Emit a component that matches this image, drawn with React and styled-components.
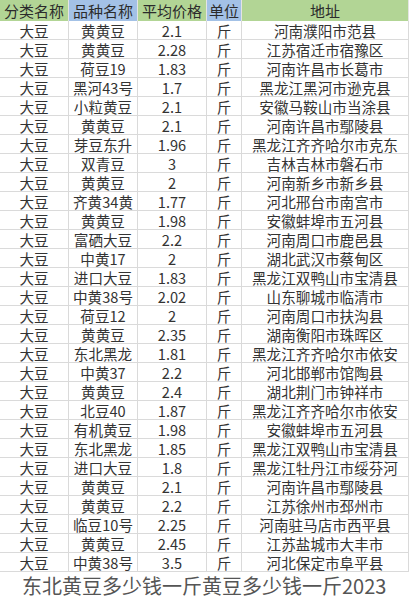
import styled, { createGlobalStyle } from "styled-components";

const GlobalStyle = createGlobalStyle`
  body {
    margin: 0;
    background: #ffffff;
    font-family: "Noto Sans CJK SC", "Liberation Sans", sans-serif;
  }
`;

const Page = styled.div`
  width: 409px;
  height: 600px;
  overflow: hidden;
  display: flex;
  flex-direction: column;
`;

const Table = styled.div`
  display: grid;
  grid-template-columns: 69px 69px 69px 35px 1fr;
`;

const Head = styled.div`
  height: 21px;
  display: flex;
  align-items: center;
  justify-content: center;
  font-size: 15px;
  color: #2b2b2b;
  background-color: ${(props) => (props.blue ? "#a3c1e6" : "#b2d595")};
  border-right: 1px solid #e4e4e4;
  box-sizing: border-box;
  white-space: nowrap;
`;

const Cell = styled.div`
  height: 19px;
  display: flex;
  align-items: center;
  justify-content: center;
  font-size: 14.6px;
  color: #333333;
  border-right: 1px solid #dadada;
  border-bottom: 1px solid #dadada;
  box-sizing: border-box;
  white-space: nowrap;
  overflow: hidden;
`;

const Caption = styled.div`
  margin-top: 4px;
  padding-left: 22px;
  font-size: 20px;
  line-height: 20px;
  color: #555555;
  white-space: nowrap;
  text-shadow: 0 0 2px #fff, 1px 1px 0 #fff, -1px -1px 0 #fff;
`;

const heads = [
  ["分类名称", false],
  ["品种名称", true],
  ["平均价格", false],
  ["单位", true],
  ["地址", false],
];

const rows = [
  ["黄黄豆", "2.1", "河南濮阳市范县"],
  ["黄黄豆", "2.28", "江苏宿迁市宿豫区"],
  ["荷豆19", "1.83", "河南许昌市长葛市"],
  ["黑河43号", "1.7", "黑龙江黑河市逊克县"],
  ["小粒黄豆", "2.1", "安徽马鞍山市当涂县"],
  ["黄黄豆", "2.1", "河南许昌市鄢陵县"],
  ["芽豆东升", "1.96", "黑龙江齐齐哈尔市克东"],
  ["双青豆", "3", "吉林吉林市磐石市"],
  ["黄黄豆", "2", "河南新乡市新乡县"],
  ["齐黄34黄", "1.77", "河北邢台市南宫市"],
  ["黄黄豆", "1.98", "安徽蚌埠市五河县"],
  ["富硒大豆", "2.2", "河南周口市鹿邑县"],
  ["中黄17", "2", "湖北武汉市蔡甸区"],
  ["进口大豆", "1.83", "黑龙江双鸭山市宝清县"],
  ["中黄38号", "2.02", "山东聊城市临清市"],
  ["荷豆12", "2", "河南周口市扶沟县"],
  ["黄黄豆", "2.35", "湖南衡阳市珠晖区"],
  ["东北黑龙", "1.81", "黑龙江齐齐哈尔市依安"],
  ["中黄37", "2.2", "河北邯郸市馆陶县"],
  ["黄黄豆", "2.4", "湖北荆门市钟祥市"],
  ["北豆40", "1.87", "黑龙江齐齐哈尔市依安"],
  ["有机黄豆", "1.98", "安徽蚌埠市五河县"],
  ["东北黑龙", "1.85", "黑龙江双鸭山市宝清县"],
  ["进口大豆", "1.8", "黑龙江牡丹江市绥芬河"],
  ["黄黄豆", "2.1", "河南许昌市鄢陵县"],
  ["黄黄豆", "2.2", "江苏徐州市邳州市"],
  ["临豆10号", "2.25", "河南驻马店市西平县"],
  ["黄黄豆", "2.45", "江苏盐城市大丰市"],
  ["中黄38号", "3.5", "河北保定市阜平县"],
];

const App = () => {
  return (
    <Page>
      <GlobalStyle />
      <Table>
        {heads.map(([label, blue]) => (
          <Head key={label} blue={blue ? 1 : 0}>
            {label}
          </Head>
        ))}
        {rows.map((row, i) => [
          <Cell key={`a${i}`}>大豆</Cell>,
          <Cell key={`b${i}`}>{row[0]}</Cell>,
          <Cell key={`c${i}`}>{row[1]}</Cell>,
          <Cell key={`d${i}`}>斤</Cell>,
          <Cell key={`e${i}`}>{row[2]}</Cell>,
        ])}
      </Table>
      <Caption>东北黄豆多少钱一斤黄豆多少钱一斤2023</Caption>
    </Page>
  );
};

export default App;
